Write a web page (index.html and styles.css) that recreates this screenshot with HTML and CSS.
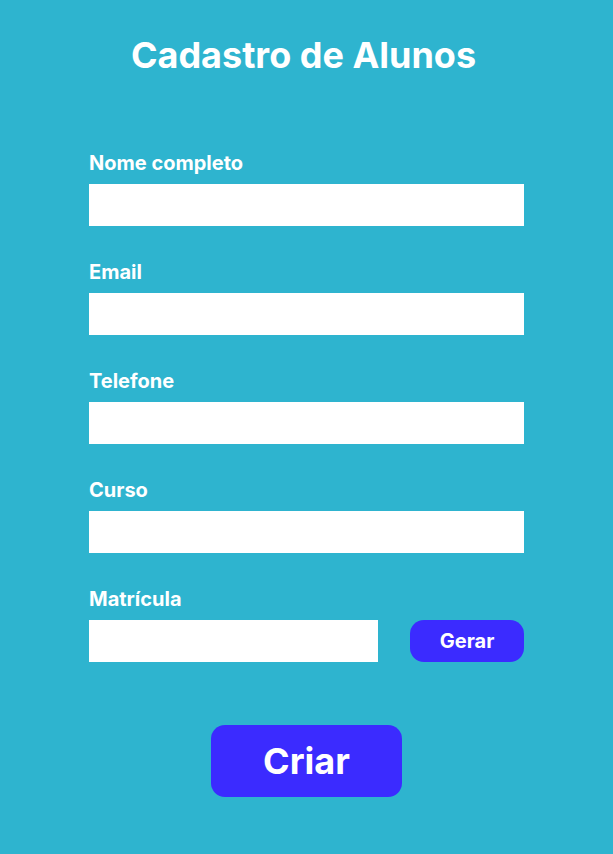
FILE: index.html
```html
<!DOCTYPE html>
<html lang="pt">
<head>
<meta charset="utf-8">
<title>Cadastro de Alunos</title>
<link rel="stylesheet" href="styles.css">
</head>
<body>
<main class="page">
  <h1 class="title">Cadastro de Alunos</h1>
  <form class="form">
    <div class="field">
      <label class="label" for="nome">Nome completo</label>
      <input class="input" id="nome" type="text">
    </div>
    <div class="field">
      <label class="label" for="email">Email</label>
      <input class="input" id="email" type="text">
    </div>
    <div class="field">
      <label class="label" for="tel">Telefone</label>
      <input class="input" id="tel" type="text">
    </div>
    <div class="field">
      <label class="label" for="curso">Curso</label>
      <input class="input" id="curso" type="text">
    </div>
    <div class="field">
      <label class="label" for="mat">Matrícula</label>
      <div class="row">
        <input class="input input-short" id="mat" type="text">
        <button type="button" class="btn btn-small">Gerar</button>
      </div>
    </div>
    <div class="actions">
      <button type="button" class="btn btn-big">Criar</button>
    </div>
  </form>
</main>
</body>
</html>
```
FILE: styles.css
```css
* { box-sizing: border-box; }
html, body {
  margin: 0;
  padding: 0;
  background: #2eb4cf;
  height: 100%;
}
body {
  font-family: Inter, "Noto Sans", sans-serif;
  color: #ffffff;
}
.page {
  width: 435px;
  margin: 0 auto;
  padding-top: 33px;
}
.title {
  margin: 0;
  padding-right: 6px;
  font-size: 36px;
  line-height: 44px;
  font-weight: 700;
  text-align: center;
}
.form {
  margin-top: 74px;
  display: flex;
  flex-direction: column;
  gap: 34px;
}
.field {
  display: flex;
  flex-direction: column;
  gap: 9px;
}
.label {
  font-size: 20px;
  line-height: 24px;
  font-weight: 700;
}
.input {
  display: block;
  width: 100%;
  height: 42px;
  border: none;
  border-radius: 0;
  background: #ffffff;
  padding: 0 10px;
  font: inherit;
  color: #000;
  outline: none;
}
.row {
  display: flex;
  justify-content: space-between;
  align-items: center;
}
.input-short {
  width: 289px;
}
.btn {
  border: none;
  background: #3b2bff;
  color: #ffffff;
  font-family: Inter, "Noto Sans", sans-serif;
  font-weight: 700;
  cursor: pointer;
  padding: 0;
}
.btn-small {
  width: 114px;
  height: 42px;
  border-radius: 14px;
  font-size: 20px;
}
.actions {
  display: flex;
  justify-content: center;
  margin-top: 29px;
}
.btn-big {
  width: 191px;
  height: 72px;
  border-radius: 14px;
  font-size: 36px;
}
```
